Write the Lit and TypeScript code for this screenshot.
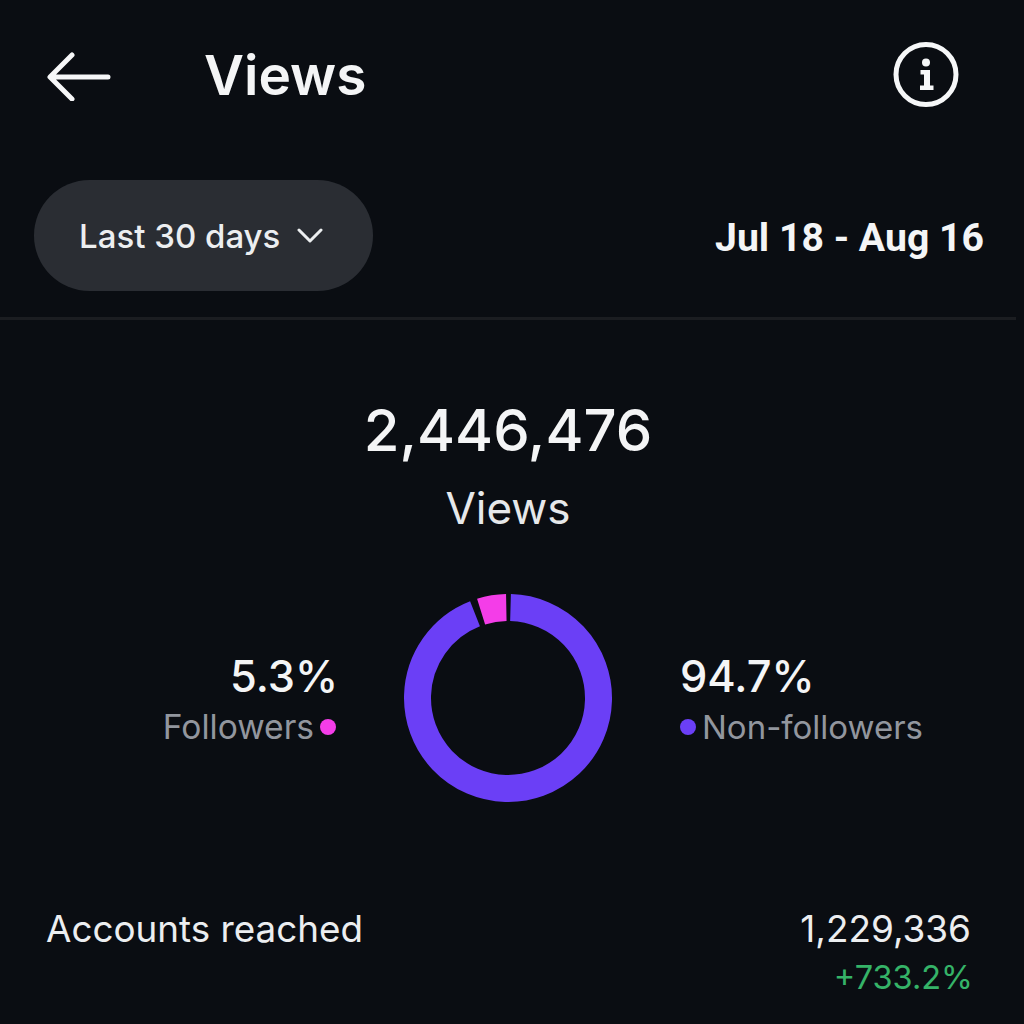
import { LitElement, html, css, svg } from "lit";
import { customElement } from "lit/decorators.js";

const RING = [
  { start: 1.6, len: 337, color: "#6b3ff6" },
  { start: 342.7, len: 16.3, color: "#f43de8" },
];

@customElement("app-root")
export class AppRoot extends LitElement {
  static styles = css`
    :host {
      display: block;
      width: 1024px;
      height: 1024px;
      overflow: hidden;
      background: #0a0d12;
      color: #f4f5f6;
      font-family: Inter, "Liberation Sans", sans-serif;
    }
    .page { width: 1016px; }
    .header {
      height: 152px;
      display: flex;
      align-items: center;
      padding: 0 56px 0 47px;
      box-sizing: border-box;
    }
    .back { width: 64px; height: 50px; display: block; }
    .title {
      margin-left: 93px;
      margin-bottom: 3px;
      font-size: 55px;
      font-weight: 600;
      line-height: 60px;
      flex: 1;
    }
    .info { width: 66px; height: 66px; display: block; overflow: visible; }
    .filters {
      display: flex;
      align-items: center;
      justify-content: space-between;
      padding: 28px 32px 0 34px;
    }
    .pill {
      width: 339px;
      height: 111px;
      box-sizing: border-box;
      border-radius: 56px;
      background: #2a2d33;
      display: flex;
      align-items: center;
      padding-left: 45px;
      gap: 17px;
      font-size: 33px;
      font-weight: 500;
      color: #eceef0;
    }
    .chev { width: 26px; height: 16px; display: block; }
    .range {
      font-family: Roboto, "Liberation Sans", sans-serif;
      font-size: 39.2px;
      font-weight: 700;
      margin-top: 4px;
    }
    .divider { height: 3px; background: #1b1d21; margin-top: 26px; }
    .total { text-align: center; padding-top: 74px; }
    .num {
      font-size: 58px;
      font-weight: 500;
      line-height: 72px;
    }
    .cap {
      font-size: 44px;
      line-height: 50px;
      margin-top: 17px;
      color: #e6e8ea;
    }
    .split {
      display: grid;
      grid-template-columns: 1fr 208px 1fr;
      column-gap: 68px;
      align-items: center;
      margin-top: 61px;
    }
    .ring { width: 208px; height: 208px; display: block; }
    .side.left { text-align: right; }
    .left .pct { margin-right: -2px; }
    .pct { font-size: 43.4px; font-weight: 500; line-height: 52px; }
    .label {
      display: flex;
      align-items: center;
      gap: 6px;
      font-size: 33px;
      line-height: 40px;
      margin-top: 5px;
      color: #92969e;
    }
    .left .label { justify-content: flex-end; font-size: 33.6px; }
    .dot { width: 16px; height: 16px; border-radius: 50%; flex: none; margin-top: 1px; }
    .reach {
      display: flex;
      justify-content: space-between;
      padding: 104px 45px 0 46px;
    }
    .reach-label { font-size: 36.8px; line-height: 46px; color: #eceef0; }
    .reach-vals { text-align: right; }
    .reach-num { font-size: 36.9px; line-height: 46px; color: #eceef0; }
    .delta { font-size: 32.5px; line-height: 44px; margin: 4px -2px 0 0; color: #35b368; }
  `;

  render() {
    return html`
      <div class="page">
        <div class="header">
          <svg class="back" viewBox="0 0 64 50" fill="none" stroke="#f6f7f8" stroke-width="5" stroke-linecap="round" stroke-linejoin="round">
            <path d="M61 26H4M25 4 3 26l22 22"></path>
          </svg>
          <div class="title">Views</div>
          <svg class="info" viewBox="0 0 66 66" fill="none">
            <circle cx="32" cy="31.5" r="30" stroke="#f6f7f8" stroke-width="5"></circle>
            <circle cx="32" cy="19.5" r="4" fill="#f6f7f8"></circle>
            <path d="M26.5 27h9.5v15.5h3.5V47h-13.5v-4.5h4V31.5h-3.5z" fill="#f6f7f8"></path>
          </svg>
        </div>
        <div class="filters">
          <div class="pill">
            <span>Last 30 days</span>
            <svg class="chev" viewBox="0 0 26 16" fill="none" stroke="#eceef0" stroke-width="3" stroke-linecap="round" stroke-linejoin="round">
              <path d="M2 2l11 11L24 2"></path>
            </svg>
          </div>
          <div class="range">Jul 18 - Aug 16</div>
        </div>
        <div class="divider"></div>
        <div class="total">
          <div class="num">2,446,476</div>
          <div class="cap">Views</div>
        </div>
        <div class="split">
          <div class="side left">
            <div class="pct">5.3%</div>
            <div class="label"><span>Followers</span><span class="dot" style="background:#f43de8"></span></div>
          </div>
          <svg class="ring" viewBox="0 0 208 208" fill="none">
            ${RING.map(
              (s) => svg`<circle cx="104" cy="104" r="90.5" stroke=${s.color} stroke-width="27"
                pathLength="360" stroke-dasharray="${s.len} ${360 - s.len}"
                transform="rotate(${s.start - 90} 104 104)"></circle>`
            )}
          </svg>
          <div class="side right">
            <div class="pct">94.7%</div>
            <div class="label"><span class="dot" style="background:#6b3ff6"></span><span>Non-followers</span></div>
          </div>
        </div>
        <div class="reach">
          <div class="reach-label">Accounts reached</div>
          <div class="reach-vals">
            <div class="reach-num">1,229,336</div>
            <div class="delta">+733.2%</div>
          </div>
        </div>
      </div>
    `;
  }
}
